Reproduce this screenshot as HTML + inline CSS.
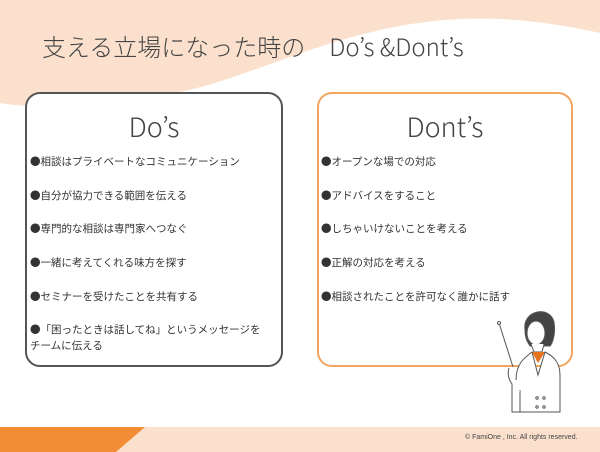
<!DOCTYPE html>
<html><head><meta charset="utf-8"><style>
*{margin:0;padding:0;box-sizing:border-box}
body{width:600px;height:452px;position:relative;overflow:hidden;background:#fff;font-family:"Liberation Sans","Noto Sans CJK JP",sans-serif;color:#333}
.t{position:absolute;white-space:nowrap}
.box{position:absolute;top:92px;height:275px;border-radius:15px;background:#fff}
.h{position:absolute;width:100%;text-align:center;top:12px;font-size:27px;color:#444;font-family:"Noto Sans CJK JP",sans-serif;font-weight:300}
.li{position:absolute;font-size:10.5px;color:#333;white-space:nowrap;line-height:16px;font-family:"Noto Sans CJK JP",sans-serif}
</style></head><body>
<svg width="600" height="452" style="position:absolute;left:0;top:0">
<path d="M0 0 H600 V33 C540 20 470 10 380 30 C300 48 240 80 180 92 C120 104 60 112 0 103 Z" fill="#fbe1cd"/>
<rect x="0" y="427" width="600" height="25" fill="#fbe1cd"/>
<polygon points="0,427 145,427 116,452 0,452" fill="#f28d35"/>
</svg>
<div class="t" style="left:42px;top:28px;font-size:24px;color:#444;font-family:'Noto Sans CJK JP',sans-serif;font-weight:300">支える立場になった時の　Do’s &amp;Dont’s</div>
<div class="box" style="left:25px;width:258px;border:2px solid #555">
<div class="h">Do’s</div>
</div>
<div class="box" style="left:317px;width:256px;border:2px solid #f3a55e">
<div class="h">Dont’s</div>
</div>
<div class="li" style="left:30px;top:154px">●相談はプライベートなコミュニケーション</div>
<div class="li" style="left:30px;top:188px">●自分が協力できる範囲を伝える</div>
<div class="li" style="left:30px;top:221px">●専門的な相談は専門家へつなぐ</div>
<div class="li" style="left:30px;top:255px">●一緒に考えてくれる味方を探す</div>
<div class="li" style="left:30px;top:289px">●セミナーを受けたことを共有する</div>
<div class="li" style="left:30px;top:322px">●「困ったときは話してね」というメッセージを<br>チームに伝える</div>
<div class="li" style="left:321px;top:154px">●オープンな場での対応</div>
<div class="li" style="left:321px;top:188px">●アドバイスをすること</div>
<div class="li" style="left:321px;top:221px">●しちゃいけないことを考える</div>
<div class="li" style="left:321px;top:255px">●正解の対応を考える</div>
<div class="li" style="left:321px;top:289px">●相談されたことを許可なく誰かに話す</div>
<svg width="100" height="115" style="position:absolute;left:480px;top:300px" fill="none" stroke="#555" stroke-width="1">
<line x1="19" y1="23" x2="33" y2="67"/><circle cx="19" cy="23" r="1.5" fill="#fff"/>
<path d="M45 30 C42 10 70 5 74 22 C76 35 72 44 70 46 L50 46 C46 40 45 36 45 30Z" fill="#444"/>
<ellipse cx="56" cy="33" rx="9" ry="12" fill="#fff"/>
<path d="M51 44 L54 52 L62 52 L64 44" fill="#fff"/>
<path d="M52 52 L58 63 L65 52 Z" fill="#e8731e" stroke="none"/>
<path d="M36 80 C36 64 44 58 52 52 L58 75 L65 52 C73 56 80 62 80 75 L80 112 L40 112 L40 90" fill="#fff"/>
<path d="M29 68 C27 74 29 80 32 84 L32 112 L40 112 L40 92" fill="#fff"/>
<circle cx="57" cy="98" r="1.2"/><circle cx="64" cy="98" r="1.2"/><circle cx="57" cy="107" r="1.2"/><circle cx="64" cy="107" r="1.2"/>
</svg>
<div class="t" style="left:465px;top:434px;font-size:7px;color:#444">© FamiOne , Inc. All rights reserved.</div>
</body></html>
